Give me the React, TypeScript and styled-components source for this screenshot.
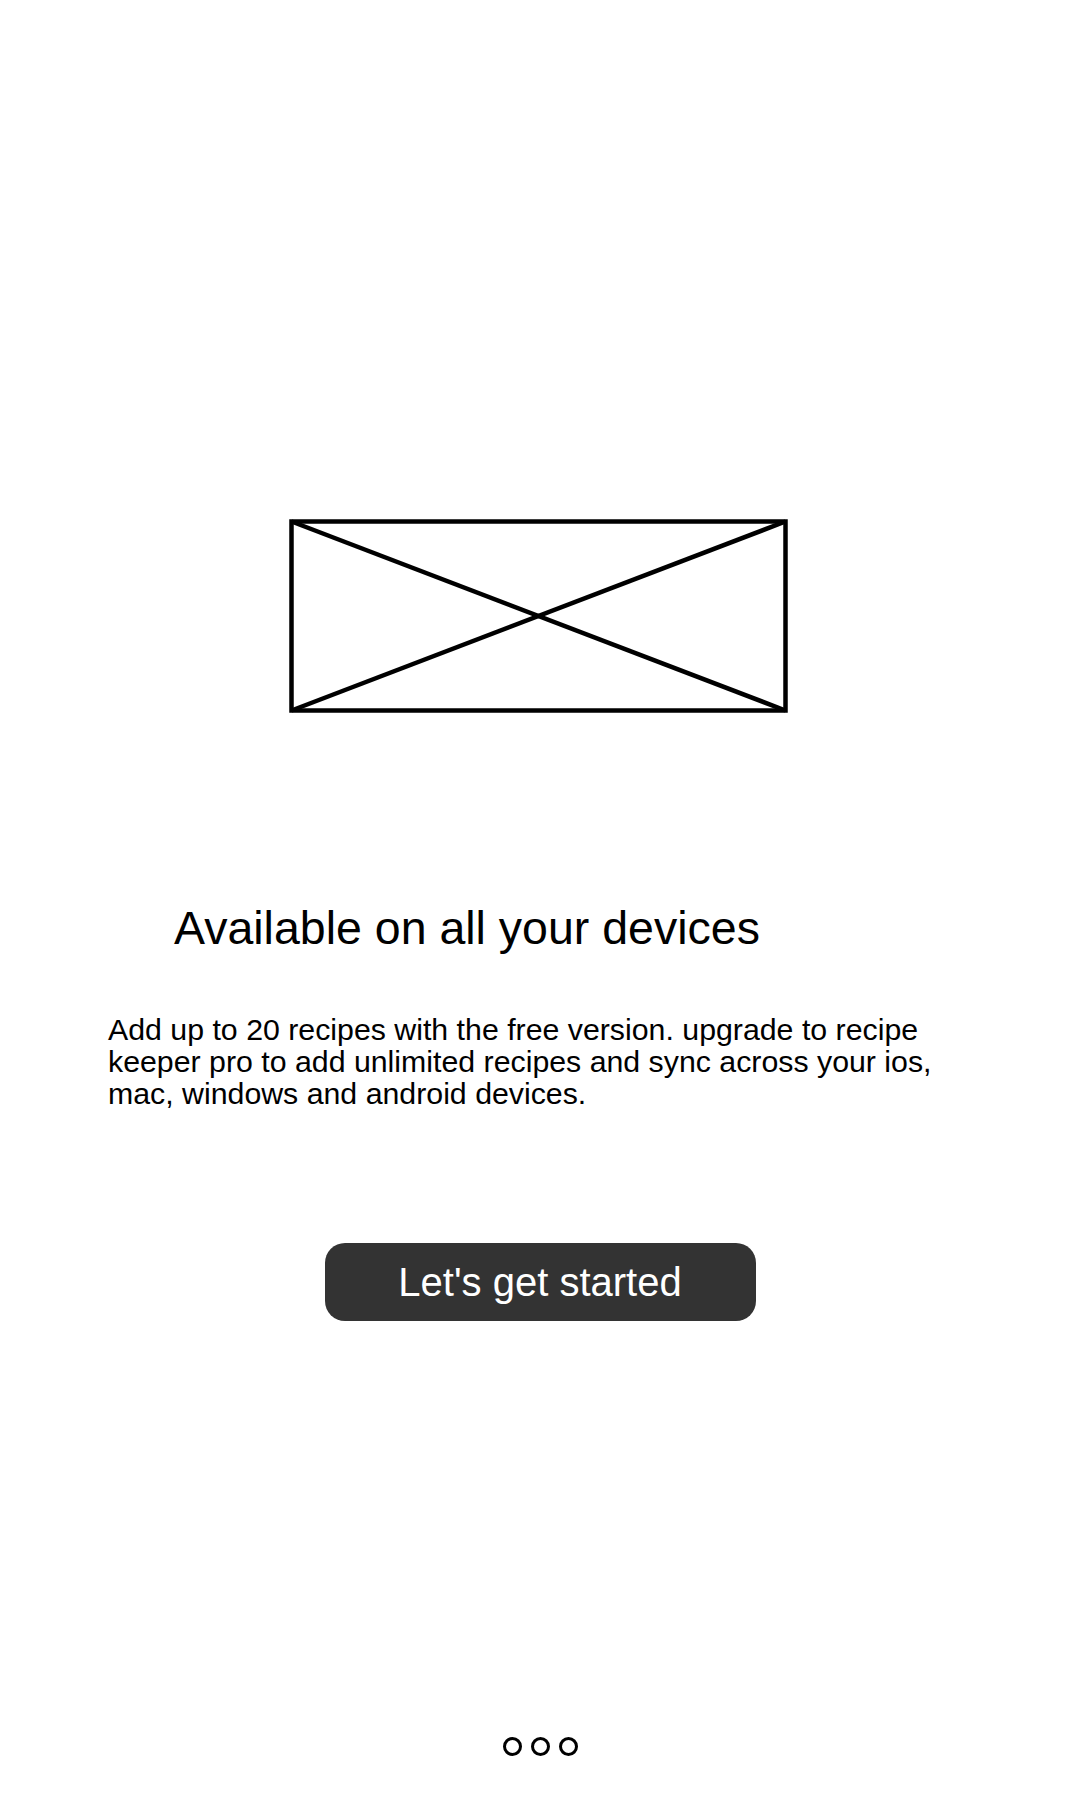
import React from "react";
import styled, { createGlobalStyle } from "styled-components";

const GlobalStyle = createGlobalStyle`
  html, body {
    margin: 0;
    padding: 0;
    background: #ffffff;
  }
  body {
    font-family: "Liberation Sans", Arial, sans-serif;
    color: #000;
  }
`;

const Screen = styled.main`
  width: 1080px;
  min-height: 1800px;
  display: flex;
  flex-direction: column;
  background: #fff;
`;

const Placeholder = styled.svg`
  display: block;
  align-self: flex-start;
  margin: 519px 0 0 289px;
  width: 499px;
  height: 194px;
`;

const Title = styled.h1`
  margin: 189px 0 0;
  padding-left: 174px;
  font-size: 46.5px;
  line-height: 52px;
  font-weight: 400;
  color: #000;
`;

const Body = styled.p`
  margin: 60px 0 0;
  padding-left: 108px;
  width: 850px;
  font-size: 30.3px;
  line-height: 32px;
  color: #000;
`;

const StartButton = styled.button`
  align-self: center;
  margin-top: 133px;
  width: 431px;
  height: 78px;
  display: flex;
  align-items: center;
  justify-content: center;
  border: none;
  border-radius: 20px;
  background: #333333;
  color: #ffffff;
  font-family: "Liberation Sans", Arial, sans-serif;
  font-size: 40px;
  line-height: 40px;
  cursor: pointer;
`;

const Dots = styled.div`
  align-self: center;
  margin-top: 416px;
  display: flex;
  gap: 9px;
`;

const Dot = styled.span`
  width: 19px;
  height: 19px;
  box-sizing: border-box;
  border: 3px solid #000;
  border-radius: 50%;
`;

export default function App() {
  return (
    <>
      <GlobalStyle />
      <Screen>
        <Placeholder viewBox="0 0 499 194" aria-hidden="true">
          <rect x="2.5" y="2.5" width="494" height="189" fill="none" stroke="#000" strokeWidth="4.5" />
          <line x1="2.5" y1="2.5" x2="496.5" y2="191.5" stroke="#000" strokeWidth="4.5" />
          <line x1="2.5" y1="191.5" x2="496.5" y2="2.5" stroke="#000" strokeWidth="4.5" />
        </Placeholder>
        <Title>Available on all your devices</Title>
        <Body>
          Add up to 20 recipes with the free version. upgrade to recipe keeper pro to add unlimited recipes and sync across your ios, mac, windows and android devices.
        </Body>
        <StartButton type="button">Let's get started</StartButton>
        <Dots>
          <Dot />
          <Dot />
          <Dot />
        </Dots>
      </Screen>
    </>
  );
}
